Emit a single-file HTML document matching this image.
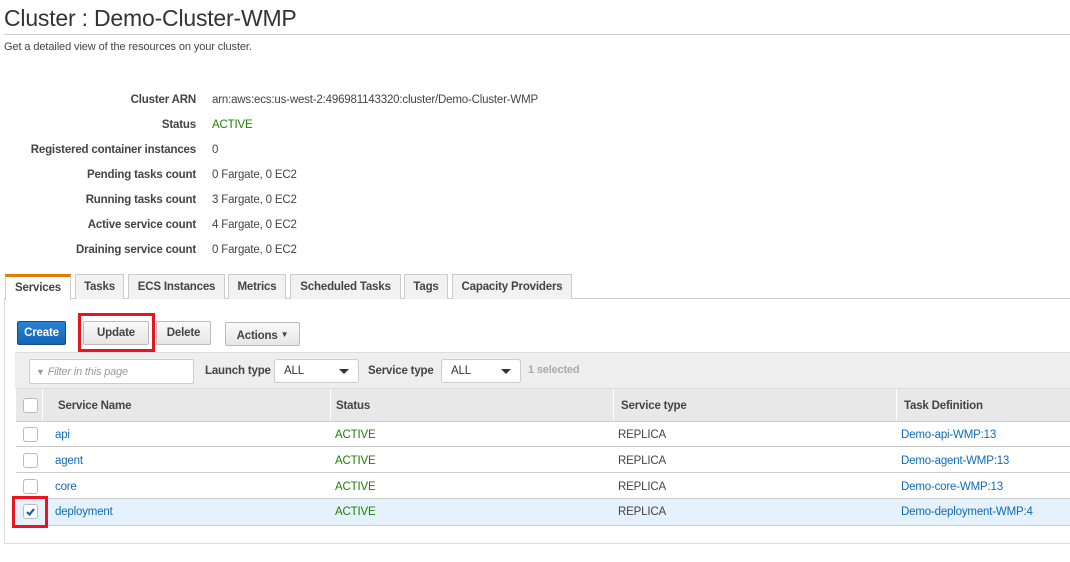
<!DOCTYPE html>
<html><head><meta charset="utf-8"><style>
*{box-sizing:border-box;margin:0;padding:0}
body{width:1070px;height:562px;overflow:hidden;background:#fff;font-family:"Liberation Sans",Arial,sans-serif;color:#444;position:relative;letter-spacing:-0.18px}
.a{position:absolute;white-space:nowrap}
.lbl{position:absolute;right:874px;font-size:11.5px;font-weight:bold;color:#444}
.val{position:absolute;left:212px;font-size:11.5px;color:#444}
.tab{position:absolute;top:274px;height:25px;background:#f2f2f2;border:1px solid #ccc;border-bottom:none;font-size:11.5px;font-weight:bold;color:#444;text-align:center;line-height:25px}
.btn{position:absolute;top:321px;height:24px;border:1px solid #bbb;border-radius:2px;background:linear-gradient(#fafafa,#e6e6e6);font-size:11.5px;font-weight:bold;color:#444;text-align:center;line-height:23px}
.sel{position:absolute;top:359px;height:24px;border:1px solid #ccc;border-radius:3px;background:#fff;font-size:11.5px;color:#333;line-height:23px;padding-left:9px}
.sel:after{content:"";position:absolute;right:9px;top:9px;border-left:5px solid transparent;border-right:5px solid transparent;border-top:5px solid #333}
.cb{position:absolute;left:23px;width:15px;height:15px;border:1px solid #bbb;border-radius:3px;background:#fff}
.row{position:absolute;left:16px;right:0;height:26px;border-bottom:1px solid #ccc;font-size:11.5px;line-height:28px}
.row span{position:absolute}
.lnk{color:#0f6bb8}
.grn{color:#1d8102}
</style></head><body>
<div class="a" style="left:4px;top:5px;font-size:23px;color:#333;letter-spacing:-0.2px">Cluster : Demo-Cluster-WMP</div>
<div class="a" style="left:4px;top:34px;width:1066px;border-top:1px solid #ccc"></div>
<div class="a" style="left:4px;top:41px;font-size:11px;color:#444;letter-spacing:-0.1px">Get a detailed view of the resources on your cluster.</div>

<div class="lbl" style="top:94px">Cluster ARN</div><div class="val" style="top:94px">arn:aws:ecs:us-west-2:496981143320:cluster/Demo-Cluster-WMP</div>
<div class="lbl" style="top:119px">Status</div><div class="val grn" style="top:119px">ACTIVE</div>
<div class="lbl" style="top:144px">Registered container instances</div><div class="val" style="top:144px">0</div>
<div class="lbl" style="top:169px">Pending tasks count</div><div class="val" style="top:169px">0 Fargate, 0 EC2</div>
<div class="lbl" style="top:194px">Running tasks count</div><div class="val" style="top:194px">3 Fargate, 0 EC2</div>
<div class="lbl" style="top:219px">Active service count</div><div class="val" style="top:219px">4 Fargate, 0 EC2</div>
<div class="lbl" style="top:244px">Draining service count</div><div class="val" style="top:244px">0 Fargate, 0 EC2</div>

<div class="a" style="left:4px;top:298px;width:1066px;height:246px;border:1px solid #ddd;border-right:none;border-top:1px solid #ccc"></div>
<div class="tab" style="left:5px;width:66px;background:#fff;border-top:3px solid #e07b00;height:26px;line-height:23px">Services</div>
<div class="tab" style="left:75px;width:49px">Tasks</div>
<div class="tab" style="left:128px;width:97px">ECS Instances</div>
<div class="tab" style="left:228px;width:58px">Metrics</div>
<div class="tab" style="left:290px;width:111px">Scheduled Tasks</div>
<div class="tab" style="left:404px;width:44px">Tags</div>
<div class="tab" style="left:452px;width:120px">Capacity Providers</div>

<div class="btn" style="left:17px;width:49px;background:linear-gradient(#2a82d4,#1564b3);border-color:#0f4f94;color:#fff">Create</div>
<div class="btn" style="left:83px;width:66px">Update</div>
<div class="a" style="left:78px;top:313px;width:77px;height:39px;border:3px solid #e8141f"></div>
<div class="btn" style="left:156px;width:55px">Delete</div>
<div class="btn" style="left:225px;width:75px;top:322px">Actions <span style="font-size:8px;vertical-align:2px">▼</span></div>

<div class="a" style="left:15px;top:352px;right:0;height:37px;background:#eee;border-top:1px solid #ddd"></div>
<div class="a" style="left:29px;top:359px;width:165px;height:25px;background:#fff;border:1px solid #ccc;border-radius:2px;font-size:11px;font-style:italic;color:#999;line-height:24px;padding-left:6px"><span style="font-style:normal;font-size:9px">▼</span> Filter in this page</div>
<div class="a" style="left:205px;top:365px;font-size:11.5px;font-weight:bold;color:#444">Launch type</div>
<div class="sel" style="left:274px;width:85px">ALL</div>
<div class="a" style="left:368px;top:365px;font-size:11.5px;font-weight:bold;color:#444">Service type</div>
<div class="sel" style="left:441px;width:80px">ALL</div>
<div class="a" style="left:528px;top:364px;font-size:11px;font-weight:bold;color:#aaa">1 selected</div>

<div class="row" style="top:388px;height:34px;background:#e8e8e8;border-top:1px solid #ddd;font-weight:bold;line-height:34px">
<span style="left:26px;top:0;bottom:0;border-left:1px solid #fff"></span><span style="left:42px">Service Name</span>
<span style="left:314px;top:0;bottom:0;border-left:1px solid #fff"></span><span style="left:320px">Status</span>
<span style="left:597px;top:0;bottom:0;border-left:1px solid #fff"></span><span style="left:605px">Service type</span>
<span style="left:880px;top:0;bottom:0;border-left:1px solid #fff"></span><span style="left:888px">Task Definition</span>
</div>
<div class="cb" style="top:398px"></div>

<div class="row" style="top:421px"><span class="lnk" style="left:39px">api</span><span class="grn" style="left:319px">ACTIVE</span><span style="left:602px">REPLICA</span><span class="lnk" style="left:885px">Demo-api-WMP:13</span></div>
<div class="cb" style="top:427px"></div>
<div class="row" style="top:447px"><span class="lnk" style="left:39px">agent</span><span class="grn" style="left:319px">ACTIVE</span><span style="left:602px">REPLICA</span><span class="lnk" style="left:885px">Demo-agent-WMP:13</span></div>
<div class="cb" style="top:453px"></div>
<div class="row" style="top:473px"><span class="lnk" style="left:39px">core</span><span class="grn" style="left:319px">ACTIVE</span><span style="left:602px">REPLICA</span><span class="lnk" style="left:885px">Demo-core-WMP:13</span></div>
<div class="cb" style="top:479px"></div>
<div class="row" style="top:499px;height:27px;background:#e5f1fc;line-height:26px"><span class="lnk" style="left:39px">deployment</span><span class="grn" style="left:319px">ACTIVE</span><span style="left:602px">REPLICA</span><span class="lnk" style="left:885px">Demo-deployment-WMP:4</span></div>
<div class="cb" style="top:504px"><svg width="13" height="13" style="position:absolute;left:0;top:0"><path d="M3 7 L5.5 9.5 L10 4" stroke="#1a5fb4" stroke-width="2.2" fill="none"/></svg></div>
<div class="a" style="left:12px;top:496px;width:36px;height:32px;border:3px solid #e8141f"></div>
</body></html>
